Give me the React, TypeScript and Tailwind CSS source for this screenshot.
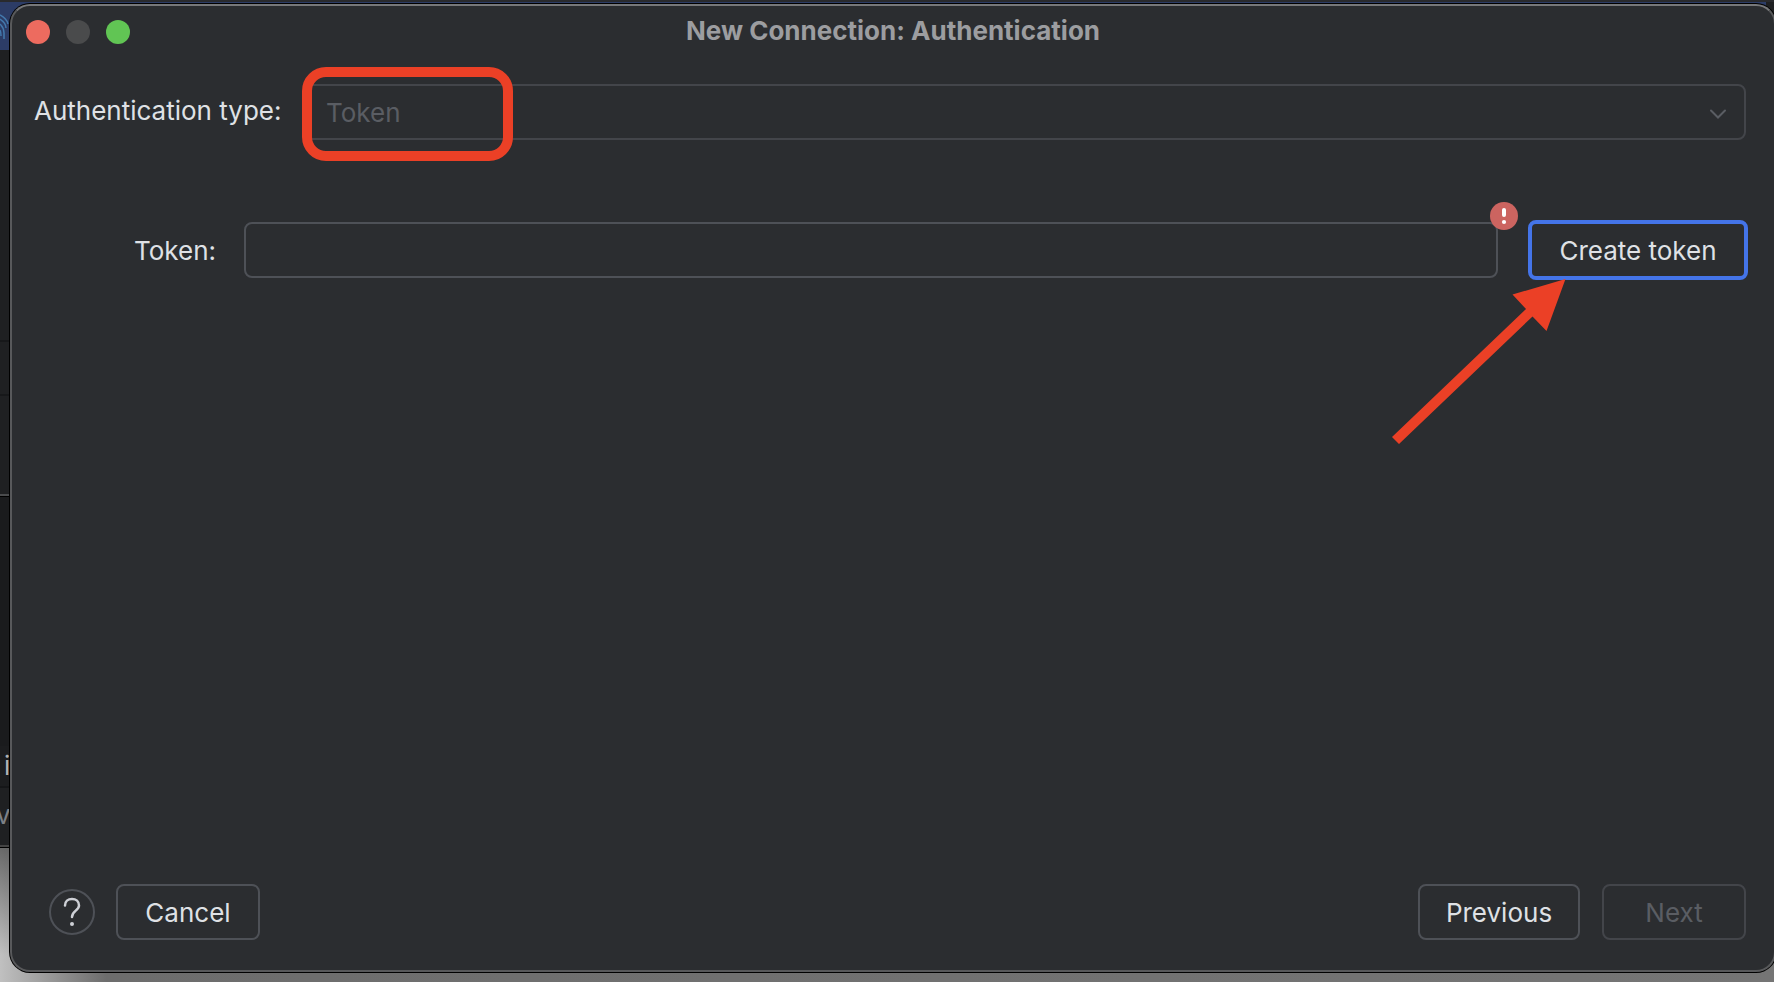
import type { ReactNode } from "react";

type FooterButtonProps = {
  children: ReactNode;
  disabled?: boolean;
  className: string;
};

function FooterButton({ children, disabled, className }: FooterButtonProps) {
  return (
    <button
      type="button"
      disabled={disabled}
      className={`h-14 rounded-lg border-2 pt-0.5 text-center ${className} ${
        disabled ? "border-[#43454a] text-[#5a5d63]" : "border-[#4e5157] text-[#dfe1e5]"
      }`}
    >
      {children}
    </button>
  );
}

/* The parent application window and the desktop that show past the dialog's edges. */
function Backdrop() {
  return (
    <div aria-hidden="true" className="absolute inset-0 flex flex-col bg-linear-to-r from-[#c0c0c0] via-[#6d6d6d] via-6% to-[#757575]">
      <div className="flex h-[848px] shrink-0 flex-col border-b border-black bg-[#1f2022] text-[26px] leading-8">
        <div className="h-0.5 bg-[#292a2d]" />
        <div className="mr-2 h-12 bg-[#2c3c66]">
          <svg width="10" height="48" viewBox="0 0 10 48" fill="none" stroke="#4379ad" strokeWidth="1.5">
            <path d="M0 13c4 2 7 5 8 9M0 17c3 2 6 5 6 9M0 22c2 2 4 5 4 9v6M0 28c1 2 1 4 1 6" />
          </svg>
        </div>
        <div className="h-[290px]" />
        <div className="h-14 border-y-2 border-[#17181a]" />
        <div className="h-[100px] border-b-2 border-[#4a4b4d]" />
        <div className="h-[250px] border-t border-black bg-[#1a1b1d]" />
        <div className="flex h-10 items-center bg-[#1c1d1f] pl-1 text-[#b0b2b6]">i</div>
        <div className="flex h-14 items-center border-t-2 border-[#151618] bg-[#1f2022] text-[#7d8086]">
          <span className="-ml-1">v</span>
        </div>
        <div className="grow border-b-2 border-[#444]" />
      </div>
      <div className="grow bg-linear-to-b from-black/45 to-transparent to-80%" />
    </div>
  );
}

function TitleBar() {
  return (
    <header className="grid h-[52px] shrink-0 grid-cols-[1fr_auto_1fr] items-center px-3.5">
      <div className="flex gap-4">
        <button type="button" aria-label="Close" className="size-6 rounded-full bg-[#ed6b5f]" />
        <button type="button" aria-label="Minimize" disabled className="size-6 rounded-full bg-[#4a4b4c]" />
        <button type="button" aria-label="Zoom" className="size-6 rounded-full bg-[#61c554]" />
      </div>
      <h1 className="pb-0.5 font-bold text-[#9c9da0]">New Connection: Authentication</h1>
    </header>
  );
}

export default function App() {
  return (
    <div className="relative flex min-h-screen overflow-hidden bg-[#737373] pt-1 pb-2.5 pl-2.5 font-['Inter',sans-serif] text-[26px] leading-8">
      <Backdrop />
      <main className="relative -mr-0.5 flex grow flex-col rounded-[20px] border-2 border-[#58595b] border-t-[#77787a] bg-[#2b2d30] text-[#dfe1e5] shadow-[0_0_0_1px_#000]">
        <TitleBar />

        <form className="flex grow flex-col pt-[26px] pr-7 pl-[22px]">
          <div className="flex items-center">
            <label htmlFor="auth-type" className="w-[270px] shrink-0 pb-0.5">
              Authentication type:
            </label>
            <div className="relative grow">
              <select
                id="auth-type"
                disabled
                className="h-14 w-full appearance-none rounded-lg border-2 border-[#43454a] bg-transparent pt-0.5 pl-5 text-[#5a5d63] opacity-100"
              >
                <option>Token</option>
              </select>
              <svg
                className="pointer-events-none absolute top-6 right-5"
                width="16"
                height="12"
                viewBox="0 0 16 12"
                fill="none"
                stroke="#5a5d63"
                strokeWidth="2"
                strokeLinecap="round"
              >
                <path d="M1 2.500l7 7 7-7" />
              </svg>
              <div className="pointer-events-none absolute -top-[17px] -left-0.5 h-[94px] w-[211px] rounded-3xl border-10 border-[#eb4026]" />
            </div>
          </div>

          <div className="mt-[82px] flex items-center">
            <label htmlFor="token" className="w-[210px] shrink-0 pl-[100px] pt-0.5">
              Token:
            </label>
            <div className="relative grow">
              <input
                id="token"
                type="text"
                className="block h-14 w-full rounded-lg border-2 border-[#4e5157] bg-transparent px-4 outline-none"
              />
              <svg className="absolute -top-5 -right-5" width="28" height="28" viewBox="0 0 28 28">
                <circle cx="14" cy="14" r="14" fill="#cc6460" />
                <rect x="12" y="6" width="4" height="9" rx="2" fill="#fff" />
                <circle cx="14" cy="20" r="2.1" fill="#fff" />
              </svg>
            </div>
            <div className="relative -my-0.5 -mr-0.5 ml-[30px] shrink-0">
              <button type="button" className="block h-[60px] w-[220px] rounded-lg border-4 border-[#4474e8] pt-0.5">
                Create token
              </button>
              <svg
                className="pointer-events-none absolute top-[59px] right-[182px]"
                width="175"
                height="166"
                viewBox="0 0 175 166"
                fill="#eb4026"
              >
                <path d="M174.500 0L121.500 15.500L135 30L1 158L8 165L141.500 37.500L155.500 52Z" />
              </svg>
            </div>
          </div>

          <footer className="mt-auto flex items-center pb-[30px] pl-[15px]">
            <button
              type="button"
              aria-label="Help"
              className="flex size-[46px] items-center justify-center rounded-full border-2 border-[#4e5157]"
            >
              <svg width="18" height="30" viewBox="0 0 18 30" fill="none">
                <path
                  d="M2 8.500C2 4.500 5 2 9 2s7 2.500 7 6.500c0 5-7 5.500-7 11.500"
                  stroke="#ced0d6"
                  strokeWidth="2.500"
                  strokeLinecap="round"
                />
                <circle cx="9" cy="27" r="2" fill="#ced0d6" />
              </svg>
            </button>
            <FooterButton className="ml-[21px] w-36">Cancel</FooterButton>
            <FooterButton className="mr-[22px] ml-auto w-[162px]">Previous</FooterButton>
            <FooterButton disabled className="w-36">
              Next
            </FooterButton>
          </footer>
        </form>
      </main>
    </div>
  );
}
